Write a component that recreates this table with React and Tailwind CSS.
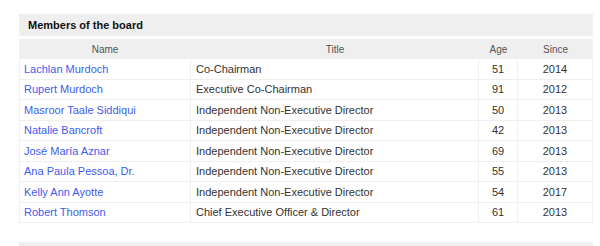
import React from "react";

const rows = [
  ["Lachlan Murdoch", "Co-Chairman", "51", "2014"],
  ["Rupert Murdoch", "Executive Co-Chairman", "91", "2012"],
  ["Masroor Taale Siddiqui", "Independent Non-Executive Director", "50", "2013"],
  ["Natalie Bancroft", "Independent Non-Executive Director", "42", "2013"],
  ["José María Aznar", "Independent Non-Executive Director", "69", "2013"],
  ["Ana Paula Pessoa, Dr.", "Independent Non-Executive Director", "55", "2013"],
  ["Kelly Ann Ayotte", "Independent Non-Executive Director", "54", "2017"],
  ["Robert Thomson", "Chief Executive Officer & Director", "61", "2013"],
];

export default function App() {
  return (
    <div
      className="w-[600px] h-[246px] bg-white overflow-hidden pl-[19px] pr-[7px] pt-[14px]"
      style={{ fontFamily: '"Liberation Sans", Arial, sans-serif' }}
    >
      <div className="h-[22px] bg-[#efefef] flex items-center pl-[9px] text-[11px] font-bold text-[#111]">
        Members of the board
      </div>
      <div className="mt-[3px] grid grid-cols-[172px_288px_39px_75px] h-[20px] bg-[#efefef] text-[10px] text-[#555] items-center">
        <div className="text-center">Name</div>
        <div className="text-center">Title</div>
        <div className="text-center">Age</div>
        <div className="text-center">Since</div>
      </div>
      <div className="border-l border-r border-[#efefef]">
        {rows.map((r, i) => (
          <div
            key={i}
            className="grid grid-cols-[171px_288px_39px_74px] h-[20.5px] border-b border-[#efefef] text-[11px] items-stretch"
          >
            <div className="flex items-center pl-[4px] text-[#3d5cf0] border-r border-[#efefef]">{r[0]}</div>
            <div className="flex items-center pl-[5px] text-[#333] border-r border-[#efefef]">{r[1]}</div>
            <div className="flex items-center justify-center text-[#333] border-r border-[#efefef]">{r[2]}</div>
            <div className="flex items-center justify-center text-[#333]">{r[3]}</div>
          </div>
        ))}
      </div>
      <div className="mt-[19px] h-[10px] bg-[#efefef]"></div>
    </div>
  );
}
